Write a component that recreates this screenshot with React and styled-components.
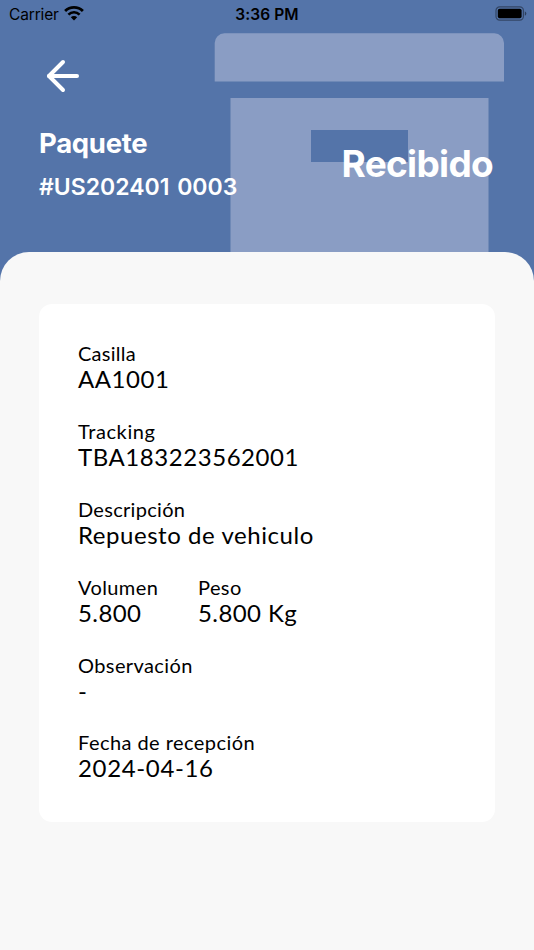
import styled, { createGlobalStyle } from "styled-components";
import { ArrowLeft } from "lucide-react";

const GlobalStyle = createGlobalStyle`
  * {
    box-sizing: border-box;
  }
  body {
    margin: 0;
    background-color: #f8f8f8;
    font-family: "Inter", "Liberation Sans", sans-serif;
  }
`;

// Styled components
const Screen = styled.main`
  display: flex;
  flex-direction: column;
  min-height: 950px;
  background-color: #5474a9;
  position: relative;
  overflow: hidden;
`;

const BoxArt = styled.svg`
  position: absolute;
  top: 33px;
  left: 214px;
  width: 290px;
  height: 230px;
`;

const StatusBar = styled.div`
  display: grid;
  grid-template-columns: 1fr auto 1fr;
  align-items: center;
  height: 27px;
  padding: 0 7px 0 9px;
  color: #000;
  position: relative;
`;

const Carrier = styled.div`
  display: flex;
  align-items: center;
  gap: 5px;
  font-size: 15.5px;
  letter-spacing: -0.15px;
  span {
    padding-top: 2px;
  }
`;

const Clock = styled.div`
  padding-top: 1px;
  margin-right: 2px;
  font-size: 15.5px;
  font-weight: 600;
  letter-spacing: 0.1px;
`;

const BatteryIcon = styled.svg`
  justify-self: end;
`;

const Header = styled.header`
  height: 225px;
  padding: 25px 41px 0 39px;
  color: #fff;
  position: relative;
`;

const BackButton = styled.button`
  display: block;
  padding: 0;
  border: none;
  background: none;
  color: inherit;
  cursor: pointer;
  svg {
    display: block;
  }
`;

const HeaderRow = styled.div`
  display: flex;
  justify-content: space-between;
  align-items: center;
  padding-top: 21px;
`;

const Title = styled.h1`
  margin: 0;
  font-size: 27.5px;
  line-height: 44px;
  font-weight: 700;
  letter-spacing: -0.3px;
`;

const PackageNumber = styled.p`
  margin: 0;
  font-size: 23px;
  line-height: 44px;
  font-weight: 600;
  word-spacing: 2px;
`;

const Status = styled.strong`
  font-size: 37px;
  line-height: 44px;
  font-weight: 700;
  letter-spacing: -0.7px;
  margin-bottom: 2px;
`;

const Sheet = styled.section`
  flex: 1;
  padding: 52px 39px 0;
  border-radius: 29px 29px 0 0;
  background-color: #f8f8f8;
  position: relative;
`;

const Card = styled.dl`
  display: flex;
  flex-direction: column;
  gap: 25.9px;
  height: 518px;
  margin: 0;
  padding: 37px 39px;
  border-radius: 13px;
  background-color: #fff;
  color: #000;
  font-family: "Lato", "Noto Sans", sans-serif;
`;

const FieldRow = styled.div`
  display: flex;
  gap: 39px;
`;

const FieldBox = styled.div`
  white-space: nowrap;
  min-width: ${({ $width }) => $width || "0"};
`;

const Label = styled.dt`
  font-size: 20px;
  line-height: 24px;
  letter-spacing: ${({ $spacing }) => $spacing}px;
`;

const Value = styled.dd`
  margin: 0;
  font-size: 24px;
  line-height: 28px;
  letter-spacing: ${({ $spacing }) => $spacing}px;
`;

const Field = ({ label, value, labelSpacing = 0.4, valueSpacing = 0.55, width }) => (
  <FieldBox $width={width}>
    <Label $spacing={labelSpacing}>{label}</Label>
    <Value $spacing={valueSpacing}>{value}</Value>
  </FieldBox>
);

const App = () => {
  return (
    <Screen>
      <GlobalStyle />

      {/* Package drawing behind the header */}
      <BoxArt viewBox="0 0 290 230" fill="#8a9dc4" aria-hidden="true">
        <path d="M.7 48.5V10a9.7 9.7 0 0 1 9.7-9.7h270a9.7 9.7 0 0 1 9.6 9.7v38.5z" />
        <path
          fillRule="evenodd"
          d="M16.5 65h258v165h-258zM97 97v32h97V97z"
        />
      </BoxArt>

      <StatusBar>
        <Carrier>
          <span>Carrier</span>
          <svg width="20" height="15" viewBox="0 0 20 15" fill="none" stroke="#000">
            <path d="M1.1 5.1a12.7 12.7 0 0 1 17.8 0" strokeWidth="2.8" />
            <path d="M4.4 8.6a8 8 0 0 1 11.2 0" strokeWidth="2.6" />
            <path d="M6.8 11.2a4.6 4.6 0 0 1 6.4 0L10 14.4z" fill="#000" stroke="none" />
          </svg>
        </Carrier>
        <Clock>3:36 PM</Clock>
        <BatteryIcon width="32" height="15" viewBox="0 0 32 15">
          <rect x="1" y=".9" width="27.4" height="13.2" rx="3.6" fill="none" stroke="#000" strokeOpacity=".4" strokeWidth="1.2" />
          <rect x="2.8" y="2.7" width="23.8" height="9.6" rx="1.8" />
          <path d="M29.8 5.2v4.6a2.5 2.5 0 0 0 0-4.6z" fillOpacity=".45" />
        </BatteryIcon>
      </StatusBar>

      <Header>
        <BackButton aria-label="Volver">
          <ArrowLeft size={48} strokeWidth={2} />
        </BackButton>
        <HeaderRow>
          <div>
            <Title>Paquete</Title>
            <PackageNumber>#US202401 0003</PackageNumber>
          </div>
          <Status>Recibido</Status>
        </HeaderRow>
      </Header>

      <Sheet>
        <Card>
          <Field label="Casilla" value="AA1001" labelSpacing={0.25} />
          <Field label="Tracking" value="TBA183223562001" labelSpacing={0.6} />
          <Field label="Descripción" value="Repuesto de vehiculo" labelSpacing={0.3} />
          <FieldRow>
            <Field label="Volumen" value="5.800" valueSpacing={0.4} width="81px" />
            <Field label="Peso" value="5.800 Kg" valueSpacing={0.4} />
          </FieldRow>
          <Field label="Observación" value="-" />
          <Field
            label="Fecha de recepción"
            value="2024-04-16"
            labelSpacing={0.45}
            valueSpacing={0.65}
          />
        </Card>
      </Sheet>
    </Screen>
  );
};

export default App;
